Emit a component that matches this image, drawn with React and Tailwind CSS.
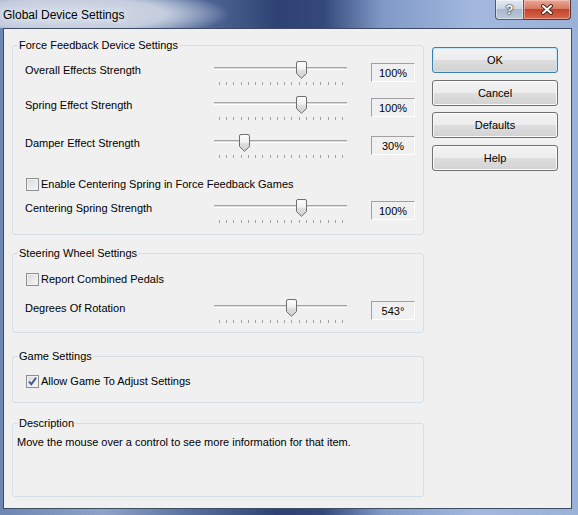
import React from 'react';

const pctRows = [
  { label: 'Overall Effects Strength', value: 100, className: 'mt-[8px]' },
  { label: 'Spring Effect Strength', value: 100, className: 'mt-[9px]' },
  { label: 'Damper Effect Strength', value: 30, className: 'mt-[12px]' },
];

function Group({ title, className = '', children }) {
  return (
    <fieldset className={`w-[412px] m-0 p-0 min-w-0 border border-[#d5dfe5] rounded-[3px] ${className}`}>
      <legend className="ml-[5px] px-[1px] leading-[14px]">{title}</legend>
      {children}
    </fieldset>
  );
}

function Thumb() {
  return (
    <svg width="11" height="18" viewBox="0 0 11 18">
      <defs>
        <linearGradient id="thumbFill" x1="0" y1="0" x2="0" y2="1">
          <stop offset="0" stopColor="#fdfdfd" />
          <stop offset="0.45" stopColor="#f1f1f1" />
          <stop offset="0.55" stopColor="#dedede" />
          <stop offset="1" stopColor="#cfcfcf" />
        </linearGradient>
      </defs>
      <path
        d="M2 0.5 H9 Q10.5 0.5 10.5 2 V12.5 L5.5 17.3 L0.5 12.5 V2 Q0.5 0.5 2 0.5 Z"
        fill="url(#thumbFill)"
        stroke="#707070"
      />
    </svg>
  );
}

function Slider({ pos }) {
  const left = Math.round(pos * 123);
  return (
    <div className="relative w-[133px] h-[26px]">
      <div className="absolute left-0 right-0 top-[7px] h-[3px] border-t border-[#a5a5a5] border-b border-b-white bg-[#dadada]" />
      <div className="absolute left-[5px] top-[22px] w-[124px] flex justify-between">
        {Array.from({ length: 18 }).map((_, i) => (
          <div key={i} className="w-px h-[3px] bg-[#a0a0a0]" />
        ))}
      </div>
      <div className="absolute top-[1px]" style={{ left }}>
        <Thumb />
      </div>
    </div>
  );
}

function SliderRow({ label, pos, text, className = '' }) {
  return (
    <div className={`flex h-[26px] pl-[12px] ${className}`}>
      <div className="w-[189px] pt-[3px] leading-[14px]">{label}</div>
      <Slider pos={pos} />
      <div className="ml-[24px] mt-[3px] w-[44px] h-[19px] border-t border-l border-[#a0a0a0] border-b border-r border-b-white border-r-white flex items-center justify-center leading-[14px]">
        {text}
      </div>
    </div>
  );
}

function Check({ label, checked, className = '' }) {
  return (
    <div className={`flex items-center h-[14px] pl-[13px] ${className}`}>
      <div className="w-[13px] h-[13px] border border-[#8e8f8f] bg-[linear-gradient(135deg,#d9d9d9,#f7f7f7)] shadow-[inset_0_0_0_1px_#f2f2f2] flex items-center justify-center">
        {checked && (
          <svg width="11" height="11" viewBox="0 0 11 11">
            <path d="M2 5.5 L4.3 8.3 L9 1.8" fill="none" stroke="#3a548f" strokeWidth="1.9" />
          </svg>
        )}
      </div>
      <span className="ml-[2px] leading-[14px]">{label}</span>
    </div>
  );
}

function Btn({ children, primary, className = '' }) {
  return (
    <button
      className={`w-[126px] h-[26px] rounded-[3px] border text-[11px] leading-[14px] text-black bg-[linear-gradient(#f3f3f3_0%,#ececec_50%,#dedede_50%,#d2d2d2_100%)] ${
        primary ? 'border-[#3c7fb1] shadow-[inset_0_0_0_1px_#c6e6f8]' : 'border-[#707070] shadow-[inset_0_0_0_1px_#fafafa]'
      } ${className}`}
    >
      {children}
    </button>
  );
}

function TitleBar() {
  return (
    <div className="flex h-[28px] bg-[radial-gradient(ellipse_160px_26px_at_70px_14px,rgba(214,220,232,1)_0%,rgba(200,208,224,0.95)_60%,rgba(190,200,218,0)_100%)]">
      <div className="pl-[3px] pt-[7px] text-[12px] leading-[16px] text-black [text-shadow:0_0_8px_#e6ebf3,0_0_5px_#e6ebf3]">
        Global Device Settings
      </div>
      <div className="ml-auto mr-[7px] flex h-[20px]">
        <div className="w-[29px] h-[20px] rounded-bl-[4px] border border-t-0 border-[#4f5b72] bg-[linear-gradient(#e3e9f1,#cbd5e2_45%,#aab8cb_50%,#bac7d9)] shadow-[inset_0_0_0_1px_rgba(255,255,255,0.45)] flex items-center justify-center text-[13px] font-bold text-white [text-shadow:0_0_1px_#333,0_0_1px_#333,0_0_2px_#333]">
          ?
        </div>
        <div className="w-[47px] h-[20px] rounded-br-[4px] border border-t-0 border-l-0 border-[#4f3a3a] bg-[linear-gradient(#eaa898,#d77a63_45%,#c2432a_50%,#d56a4e)] shadow-[inset_0_0_0_1px_rgba(255,220,210,0.45)] flex items-center justify-center">
          <svg width="14" height="11" viewBox="0 0 14 11">
            <path d="M3 2 L11 9 M11 2 L3 9" stroke="#4a2a22" strokeWidth="4" strokeLinecap="round" />
            <path d="M3 2 L11 9 M11 2 L3 9" stroke="#ffffff" strokeWidth="2" strokeLinecap="round" />
          </svg>
        </div>
      </div>
    </div>
  );
}

export default function App() {
  return (
    <div className="w-[578px] h-[515px] overflow-hidden flex flex-col [font-family:'Liberation_Sans',Arial,sans-serif] text-[11px] text-black bg-[linear-gradient(to_right,#6d86b2_0%,#8ea3c8_18%,#5b73a1_32%,#2d4272_48%,#34497a_56%,#7f99c6_66%,#a2b8de_82%,#9ab1d8_100%)]">
      <TitleBar />
      <div className="ml-[3px] w-[569px] h-[481px] border border-[#3e4d63] bg-[#f0f0f0] flex">
        <div className="flex flex-col pl-[8px] pt-[9px]">
          <Group title="Force Feedback Device Settings" className="h-[197px]">
            {pctRows.map((r) => (
              <SliderRow key={r.label} label={r.label} pos={r.value / 150} text={`${r.value}%`} className={r.className} />
            ))}
            <Check label="Enable Centering Spring in Force Feedback Games" className="mt-[18px]" />
            <SliderRow label="Centering Spring Strength" pos={100 / 150} text="100%" className="mt-[7px]" />
          </Group>
          <Group title="Steering Wheel Settings" className="h-[87px] mt-[11px]">
            <Check label="Report Combined Pedals" className="mt-[12px]" />
            <SliderRow label="Degrees Of Rotation" pos={(543 - 40) / 860} text="543°" className="mt-[12px]" />
          </Group>
          <Group title="Game Settings" className="h-[54px] mt-[16px]">
            <Check label="Allow Game To Adjust Settings" checked className="mt-[11px]" />
          </Group>
          <Group title="Description" className="h-[81px] mt-[13px]">
            <div className="pl-[4px] mt-[5px] leading-[14px]">
              Move the mouse over a control to see more information for that item.
            </div>
          </Group>
        </div>
        <div className="flex flex-col pt-[18px] ml-[8px]">
          <Btn primary>OK</Btn>
          <Btn className="mt-[7px]">Cancel</Btn>
          <Btn className="mt-[6px]">Defaults</Btn>
          <Btn className="mt-[7px]">Help</Btn>
        </div>
      </div>
    </div>
  );
}
